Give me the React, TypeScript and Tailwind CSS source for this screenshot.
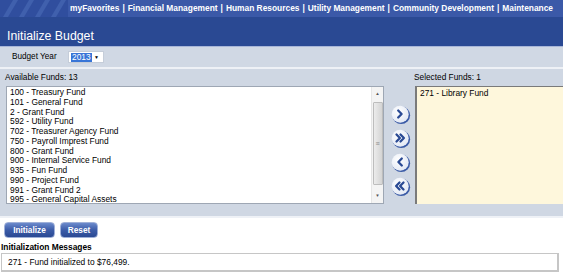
import React from "react";

const funds = [
  "100 - Treasury Fund",
  "101 - General Fund",
  "2 - Grant Fund",
  "592 - Utility Fund",
  "702 - Treasurer Agency Fund",
  "750 - Payroll Imprest Fund",
  "800 - Grant Fund",
  "900 - Internal Service Fund",
  "935 - Fun Fund",
  "990 - Project Fund",
  "991 - Grant Fund 2",
  "995 - General Capital Assets",
];

const navItems = [
  "myFavorites",
  "Financial Management",
  "Human Resources",
  "Utility Management",
  "Community Development",
  "Maintenance",
];

function MoveButton({ dir, double }: { dir: "right" | "left"; double?: boolean }) {
  const chevron = (x: number) =>
    dir === "right"
      ? `M${x - 1.8} 5.5 L${x + 1.6} 9 L${x - 1.8} 12.5`
      : `M${x + 1.8} 5.5 L${x - 1.6} 9 L${x + 1.8} 12.5`;
  const xs = double ? (dir === "right" ? [7.3, 11.3] : [6.7, 10.7]) : [9];
  const id = `g-${dir}-${double ? 2 : 1}`;
  return (
    <svg width="20" height="20" viewBox="0 0 20 20">
      <defs>
        <radialGradient id={id} cx="40%" cy="35%" r="70%">
          <stop offset="0%" stopColor="#ffffff" />
          <stop offset="100%" stopColor="#e2e8f4" />
        </radialGradient>
      </defs>
      <circle cx="10.2" cy="10.2" r="8.9" fill="#3a5aa6" />
      <circle cx="9.2" cy="9.2" r="8.5" fill={`url(#${id})`} />
      {xs.map((x) => (
        <path
          key={x}
          d={chevron(x)}
          fill="none"
          stroke="#2a4a94"
          strokeWidth="2.3"
          strokeLinecap="round"
          strokeLinejoin="round"
        />
      ))}
    </svg>
  );
}

export default function App() {
  return (
    <div className="w-[563px] h-[274px] overflow-hidden bg-white font-['Liberation_Sans',Arial,sans-serif] text-black">
      {/* top nav */}
      <div className="relative h-[17px] bg-[#3b59a8] flex items-center justify-end pr-[10px]">
        <svg className="absolute left-0 top-0" width="68" height="17" viewBox="0 0 68 17">
          <rect width="68" height="17" fill="#304e9e" />
          {[0, 16, 32, 48].map((x) => (
            <path key={x} d={`M${x + 3} 17 L${x + 13} 0 L${x + 18} 0 L${x + 8} 17 Z`} fill="#4060ad" />
          ))}
        </svg>
        <div className="relative text-[8.4px] font-bold text-white leading-none whitespace-nowrap">
          {navItems.map((n, i) => (
            <span key={n}>
              {i > 0 && <span className="mx-[3px]">|</span>}
              {n}
            </span>
          ))}
        </div>
      </div>

      {/* title */}
      <div className="h-[30px] bg-[#2a4993] border-b border-[#a8b6d8] flex items-end pl-[7px] pb-[4px]">
        <span className="text-[12.3px] text-white leading-none">Initialize Budget</span>
      </div>

      {/* budget year */}
      <div className="h-[22px] bg-[#d0d8e4] flex items-center pl-[12px] border-b-2 border-[#eef1f6]">
        <span className="text-[8.2px] w-[56px] whitespace-nowrap">Budget Year</span>
        <div className="h-[12px] w-[36px] bg-white border border-[#c5cdd9] flex items-center pl-[2px]">
          <span className="bg-[#3875d7] text-white text-[8.4px] leading-[9px] px-[1px]">2013</span>
          <span className="ml-auto mr-[4px] text-[5px] leading-none">▼</span>
        </div>
      </div>

      {/* funds area */}
      <div className="h-[149px] bg-[#cfd7e3] pl-[6px] pt-[3px] border-b-2 border-[#eef1f6]">
        <div className="flex text-[8.3px] h-[10px] items-center">
          <span className="w-[409px] -ml-[1px]">Available Funds: 13</span>
          <span>Selected Funds: 1</span>
        </div>
        <div className="flex h-[118px] mt-[4px]">
          <div className="w-[378px] bg-white border border-[#9ea7b4] flex">
            <div className="flex-1 pl-[3px] pt-[1px] text-[8.4px] leading-[9.75px]">
              {funds.map((f) => (
                <div key={f} className="whitespace-nowrap">
                  {f}
                </div>
              ))}
            </div>
            <div className="w-[12px] bg-[#f4f4f4] border-l border-[#e6e6e6] flex flex-col items-center">
              <span className="text-[4.5px] leading-none mt-[5px] text-[#555]">▲</span>
              <div className="w-[10px] h-[83px] mt-[5px] bg-gradient-to-r from-[#ececec] to-[#d4d4d4] border border-[#bdbdbd] rounded-[1px] flex items-center justify-center">
                <span className="text-[7px] leading-none text-[#888]">≡</span>
              </div>
              <span className="text-[4.5px] leading-none mt-auto mb-[5px] text-[#555]">▼</span>
            </div>
          </div>
          <div className="w-[31px] flex flex-col items-center pt-[19px] gap-[4px] pl-[2px]">
            <MoveButton dir="right" />
            <MoveButton dir="right" double />
            <MoveButton dir="left" />
            <MoveButton dir="left" double />
          </div>
          <div className="flex-1 bg-[#fef7dc] border-l-2 border-t border-[#7a7a7a] pl-[3px] pt-[2px] text-[8.4px] leading-[9.75px]">
            271 - Library Fund
          </div>
        </div>
      </div>

      {/* actions */}
      <div className="flex gap-[5px] pl-[4px] mt-[4px]">
        <button className="h-[16px] w-[51px] rounded-[4px] bg-gradient-to-b from-[#6c8acc] via-[#3c5ca8] to-[#2a4993] border border-[#9fb0d8] text-white text-[8.3px] font-bold leading-none">
          Initialize
        </button>
        <button className="h-[16px] w-[38px] rounded-[4px] bg-gradient-to-b from-[#6c8acc] via-[#3c5ca8] to-[#2a4993] border border-[#9fb0d8] text-white text-[8.3px] font-bold leading-none">
          Reset
        </button>
      </div>
      <div className="pl-[1px] mt-[4px] text-[8.4px] font-bold leading-[10px]">Initialization Messages</div>
      <div className="ml-[1px] mt-[1px] w-[558px] h-[19px] border border-[#c6c6c6] border-r-2 border-b-2 flex items-center pl-[6px] text-[8.4px]">
        271 - Fund initialized to $76,499.
      </div>
    </div>
  );
}
